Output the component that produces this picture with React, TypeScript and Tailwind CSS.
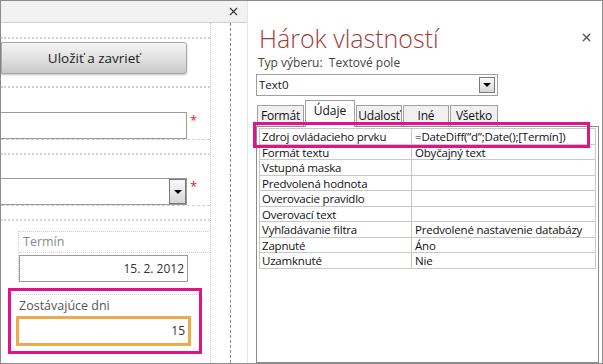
import { X } from "lucide-react";

const font = { fontFamily: '"Open Sans", "Noto Sans", sans-serif' };

const rows: [string, string][] = [
  ["Zdroj ovládacieho prvku", "=DateDiff(\u201dd\u201d;Date();[Termín])"],
  ["Formát textu", "Obyčajný text"],
  ["Vstupná maska", ""],
  ["Predvolená hodnota", ""],
  ["Overovacie pravidlo", ""],
  ["Overovací text", ""],
  ["Vyhľadávanie filtra", "Predvolené nastavenie databázy"],
  ["Zapnuté", "Áno"],
  ["Uzamknuté", "Nie"],
];

const tabs = ["Formát", "Údaje", "Udalosť", "Iné", "Všetko"];

function DropButton({ className }: { className: string }) {
  return (
    <div
      className={`flex items-center justify-center border border-[#7a7a7a] bg-gradient-to-b from-[#fafafa] to-[#d6d6d6] ${className}`}
    >
      <div className="h-0 w-0 border-x-[4px] border-t-[4px] border-x-transparent border-t-black" />
    </div>
  );
}

function Asterisk() {
  return <span className="ml-[3px] mt-[2px] self-start text-[13px] leading-none text-[#e02020]">*</span>;
}

function FormPanel() {
  return (
    <div className="flex w-[247px] flex-col border-r border-[#e6e6e6]">
      <div className="flex h-[22px] items-center justify-end border-b border-[#cfcfcf] bg-[#f2f2f2] pr-[7px]">
        <X className="size-[13px] text-[#333]" strokeWidth={2} />
      </div>
      <div className="flex flex-1">
        <div className="w-[210px] border-r border-dotted border-[#c8c8c8]">
          {/* button row */}
          <div className="mt-[14px] border-y-2 border-dotted border-[#d0d0d0] pb-[12px] pt-[3px]">
            <div className="flex h-[32px] w-[186px] items-center justify-center rounded-r-[3px] border border-[#a8a8a8] bg-gradient-to-b from-[#f4f4f4] via-[#e2e2e2] to-[#c8c8c8] text-[13.5px] text-[#222] shadow-[0_1px_2px_rgba(0,0,0,0.25)]">
              Uložiť a zavrieť
            </div>
          </div>
          {/* text field */}
          <div className="mt-[24px] flex border-b border-dashed border-[#cfcfcf]">
            <div className="h-[27px] w-[186px] border border-l-0 border-[#9a9a9a] bg-white" />
            <Asterisk />
          </div>
          <div className="mt-[13px] border-b-2 border-dotted border-[#d6d6d6]" />
          {/* combo */}
          <div className="mt-[23px] flex border-b border-dashed border-[#cfcfcf]">
            <div className="flex h-[27px] w-[186px] items-center justify-end border border-l-0 border-[#9a9a9a] bg-white">
              <DropButton className="h-[25px] w-[17px]" />
            </div>
            <Asterisk />
          </div>
          <div className="mt-[13px] border-b-2 border-dotted border-[#d6d6d6]" />
          {/* Termín */}
          <div className="ml-[17px] mt-[10px] border-l border-dotted border-[#cfcfcf]">
            <div className="flex h-[22px] items-center border-y border-dotted border-[#cfcfcf] pl-[4px] text-[12.5px] text-[#8a8a8a]">
              Termín
            </div>
            <div className="mt-[2px] flex h-[27px] w-[169px] items-center justify-end border border-[#9a9a9a] pr-[3px] text-[12px] text-[#333]">
              15. 2. 2012
            </div>
          </div>
          {/* Zostávajúce dni */}
          <div className="ml-[7px] mt-[6px] h-[66px] w-[194px] border-[3px] border-[#e0138a] pl-[5px] pt-[3px]">
            <div className="border-t border-dotted border-[#cfcfcf] pl-[3px] text-[12.5px] leading-[21px] text-[#555]">
              Zostávajúce dni
            </div>
            <div className="flex h-[30px] w-[175px] items-center justify-end border-[3px] border-[#f0a94a] pr-[3px] text-[12px] text-[#333]">
              15
            </div>
          </div>
        </div>
        <div className="w-[20px] border-r border-dashed border-[#8a8a8a]" />
      </div>
    </div>
  );
}

function PropertySheet() {
  return (
    <div className="flex flex-1 flex-col pl-[8px] pr-[3px]">
      <div className="mt-[22px] flex items-start justify-between pl-[3px]">
        <span className="text-[25px] font-light leading-[30px] text-[#a33a3a]">Hárok vlastností</span>
        <X className="mr-[6px] mt-[8px] size-[13px] text-[#555]" strokeWidth={2.5} />
      </div>
      <div className="mt-[1px] pl-[2px] text-[12px] leading-[17px] text-[#444]">Typ výberu:&nbsp; Textové pole</div>
      <div className="mt-[3px] flex h-[22px] w-[242px] items-center justify-between border border-[#a0a0a0] pl-[2px] pr-[2px] text-[11.5px] text-[#111]">
        Text0
        <DropButton className="h-[16px] w-[16px]" />
      </div>
      <div className="mt-[4px] flex items-end gap-[1px] pl-[1px]">
        {tabs.map((t) =>
          t === "Údaje" ? (
            <div
              key={t}
              className="relative z-10 -mb-px flex h-[27px] w-[50px] items-start justify-center border border-b-0 border-[#a0a0a0] bg-white pt-[1px] text-[12px] text-[#111]"
            >
              {t}
            </div>
          ) : (
            <div
              key={t}
              className="flex h-[21px] items-center justify-center whitespace-nowrap border border-b-0 border-[#a0a0a0] bg-[#f0f0f0] text-[12px] tracking-[-0.2px] text-[#111]"
              style={{ width: t === "Formát" ? 47 : t === "Všetko" ? 48 : 46 }}
            >
              {t}
            </div>
          ),
        )}
      </div>
      <div className="relative flex-1 border border-[#8c8c8c] px-[2px] pt-[1px]">
        <div className="pointer-events-none absolute left-[-4px] top-[-5px] z-10 h-[26px] w-[337px] border-[3px] border-[#e0138a]" />
        <div className="border-l border-t border-[#c8c8c8]">
          {rows.map(([k, v]) => (
            <div
              key={k}
              className="flex h-[15.5px] whitespace-nowrap border-b border-[#c8c8c8] text-[11.5px] leading-[15px] tracking-[-0.2px] text-[#111]"
            >
              <div className="w-[152px] border-r border-[#c8c8c8] pl-[2px]">{k}</div>
              <div className="flex-1 border-r border-[#c8c8c8] pl-[3px]">{v}</div>
            </div>
          ))}
        </div>
      </div>
    </div>
  );
}

export default function App() {
  return (
    <div style={font} className="flex h-[364px] w-[603px] border border-[#8c8c8c] bg-white">
      <FormPanel />
      <PropertySheet />
    </div>
  );
}
